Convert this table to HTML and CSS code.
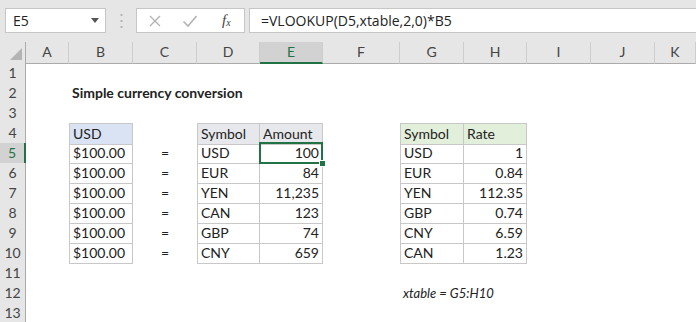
FILE: index.html
```html
<!DOCTYPE html>
<html>
<head>
    <title>Simple currency conversion</title>
    <link rel="stylesheet" href="styles.css">
</head>
<body>
    <div class="toolbar">
        <div class="namebox">
            <span>E5</span>
            <svg width="8" height="5" viewBox="0 0 8 5"><polygon points="0,0 8,0 4,5" fill="#555"/></svg>
        </div>
        <div class="grip">
            <svg width="3" height="16" viewBox="0 0 3 16">
                <rect x="0.5" y="1" width="2" height="2" fill="#b5b5b5"/>
                <rect x="0.5" y="7" width="2" height="2" fill="#b5b5b5"/>
                <rect x="0.5" y="13" width="2" height="2" fill="#b5b5b5"/>
            </svg>
        </div>
        <div class="fxbox">
            <svg class="ico" width="14" height="14" viewBox="0 0 14 14"><path d="M2 2 L12 12 M12 2 L2 12" stroke="#b3b3b3" stroke-width="1.4" fill="none"/></svg>
            <svg class="ico" width="16" height="14" viewBox="0 0 16 14"><path d="M1.5 7.5 L6 12 L14.5 2" stroke="#b3b3b3" stroke-width="1.6" fill="none"/></svg>
            <span class="fx">f<sub>x</sub></span>
        </div>
        <div class="formula">=VLOOKUP(D5,xtable,2,0)*B5</div>
    </div>

    <div class="sheet">
        <div class="row head">
            <div class="corner">
                <svg width="12" height="12" viewBox="0 0 12 12"><polygon points="12,0 12,12 0,12" fill="#b4b4b4"/></svg>
            </div>
            <div class="ch">A</div>
            <div class="ch">B</div>
            <div class="ch">C</div>
            <div class="ch">D</div>
            <div class="ch active">E</div>
            <div class="ch">F</div>
            <div class="ch">G</div>
            <div class="ch">H</div>
            <div class="ch">I</div>
            <div class="ch">J</div>
            <div class="ch">K</div>
        </div>

        <div class="row"><div class="rh">1</div></div>
        <div class="row">
            <div class="rh">2</div><div></div>
            <div class="c title">Simple currency conversion</div>
        </div>
        <div class="row"><div class="rh">3</div></div>
        <div class="row">
            <div class="rh">4</div><div></div>
            <div class="c b bl bt hb">USD</div><div></div>
            <div class="c b bl bt hg">Symbol</div>
            <div class="c b bt hg">Amount</div><div></div>
            <div class="c b bl bt hgr">Symbol</div>
            <div class="c b bt hgr">Rate</div>
        </div>
        <div class="row">
            <div class="rh active">5</div><div></div>
            <div class="c b bl num cur">$100.00</div>
            <div class="c eq">=</div>
            <div class="c b bl">USD</div>
            <div class="c b num sel">100</div><div></div>
            <div class="c b bl">USD</div>
            <div class="c b num">1</div>
        </div>
        <div class="row">
            <div class="rh">6</div><div></div>
            <div class="c b bl num cur">$100.00</div>
            <div class="c eq">=</div>
            <div class="c b bl">EUR</div>
            <div class="c b num">84</div><div></div>
            <div class="c b bl">EUR</div>
            <div class="c b num">0.84</div>
        </div>
        <div class="row">
            <div class="rh">7</div><div></div>
            <div class="c b bl num cur">$100.00</div>
            <div class="c eq">=</div>
            <div class="c b bl">YEN</div>
            <div class="c b num">11,235</div><div></div>
            <div class="c b bl">YEN</div>
            <div class="c b num">112.35</div>
        </div>
        <div class="row">
            <div class="rh">8</div><div></div>
            <div class="c b bl num cur">$100.00</div>
            <div class="c eq">=</div>
            <div class="c b bl">CAN</div>
            <div class="c b num">123</div><div></div>
            <div class="c b bl">GBP</div>
            <div class="c b num">0.74</div>
        </div>
        <div class="row">
            <div class="rh">9</div><div></div>
            <div class="c b bl num cur">$100.00</div>
            <div class="c eq">=</div>
            <div class="c b bl">GBP</div>
            <div class="c b num">74</div><div></div>
            <div class="c b bl">CNY</div>
            <div class="c b num">6.59</div>
        </div>
        <div class="row">
            <div class="rh">10</div><div></div>
            <div class="c b bl num cur">$100.00</div>
            <div class="c eq">=</div>
            <div class="c b bl">CNY</div>
            <div class="c b num">659</div><div></div>
            <div class="c b bl">CAN</div>
            <div class="c b num">1.23</div>
        </div>
        <div class="row"><div class="rh">11</div></div>
        <div class="row">
            <div class="rh">12</div><div></div><div></div><div></div><div></div><div></div><div></div>
            <div class="c note">xtable = G5:H10</div>
        </div>
        <div class="row"><div class="rh">13</div></div>
    </div>
</body>
</html>
```

FILE: styles.css
```css
body {
    margin: 0;
    background: #fff;
    font-family: Lato, "Liberation Sans", sans-serif;
    color: #222;
}

/* barre de formule */

.toolbar {
    display: flex;
    align-items: flex-start;
    height: 42px;
    padding: 8px 0 0 5px;
    box-sizing: border-box;
    background: #e6e6e6;
}

.namebox {
    display: flex;
    align-items: center;
    justify-content: space-between;
    width: 101px;
    height: 25px;
    box-sizing: border-box;
    padding: 0 6px 0 7px;
    background: #fff;
    border: 1px solid #c6c6c6;
    font-family: "Open Sans", sans-serif;
    font-size: 14px;
    color: #222;
}

.grip {
    display: flex;
    align-items: center;
    justify-content: center;
    width: 30px;
    height: 25px;
}

.fxbox {
    display: flex;
    align-items: center;
    width: 109px;
    height: 25px;
    box-sizing: border-box;
    padding-left: 11px;
    background: #fff;
    border: 1px solid #c6c6c6;
}

.fxbox .ico {
    margin-right: 20px;
}

.fx {
    margin-left: 4px;
    font-family: "Liberation Serif", serif;
    font-style: italic;
    font-size: 15px;
    color: #444;
}

.fx sub {
    font-size: 10px;
    vertical-align: -1px;
}

.formula {
    flex: 1;
    height: 25px;
    margin-left: 4px;
    box-sizing: border-box;
    padding-left: 11px;
    line-height: 23px;
    background: #fff;
    border: 1px solid #c6c6c6;
    border-right: none;
    font-family: "Open Sans", sans-serif;
    font-size: 14px;
    color: #222;
}

/* feuille */

.row {
    display: grid;
    grid-template-columns: 26px 43px 64px 64px 63px 63px 77px 64px 63px 64px 64px 1fr;
    height: 20px;
}

.row.head {
    height: 21px;
    background: #e6e6e6;
}

.corner {
    display: flex;
    align-items: flex-end;
    justify-content: flex-end;
    padding: 0 3px 3px 0;
    border-right: 1px solid #ababab;
    border-bottom: 1px solid #ababab;
}

.ch {
    box-sizing: border-box;
    border-right: 1px solid #cdcdcd;
    border-bottom: 1px solid #ababab;
    text-align: center;
    line-height: 20px;
    font-size: 14px;
    color: #444;
}

.ch.active {
    background: #d2d2d2;
    border-bottom: 2px solid #217346;
    color: #217346;
}

.rh {
    box-sizing: border-box;
    background: #e6e6e6;
    border-right: 1px solid #ababab;
    border-bottom: 1px solid #d4d4d4;
    text-align: center;
    line-height: 20px;
    font-size: 14px;
    color: #444;
}

.rh.active {
    background: #d2d2d2;
    border-right: 2px solid #217346;
    color: #217346;
}

.c {
    position: relative;
    box-sizing: border-box;
    padding: 0 3px;
    line-height: 20px;
    font-size: 14px;
    white-space: nowrap;
}

.b {
    border-right: 1px solid #c8c8c8;
    border-bottom: 1px solid #c8c8c8;
}

.bl {
    border-left: 1px solid #c8c8c8;
}

.bt {
    border-top: 1px solid #c8c8c8;
}

.num {
    text-align: right;
}

.cur {
    padding-right: 7px;
}

.eq {
    text-align: center;
}

.hb {
    background: #dae3f3;
}

.hg {
    background: #e7e8ec;
}

.hgr {
    background: #e2efda;
}

.title {
    font-weight: bold;
}

.note {
    font-style: italic;
    font-size: 13px;
}

.sel {
    z-index: 2;
}

.sel::before {
    content: "";
    position: absolute;
    top: -1px;
    left: -1px;
    right: -1px;
    bottom: -1px;
    border: 2px solid #217346;
}

.sel::after {
    content: "";
    position: absolute;
    right: -4px;
    bottom: -4px;
    width: 5px;
    height: 5px;
    background: #217346;
    border: 1px solid #fff;
}
```
